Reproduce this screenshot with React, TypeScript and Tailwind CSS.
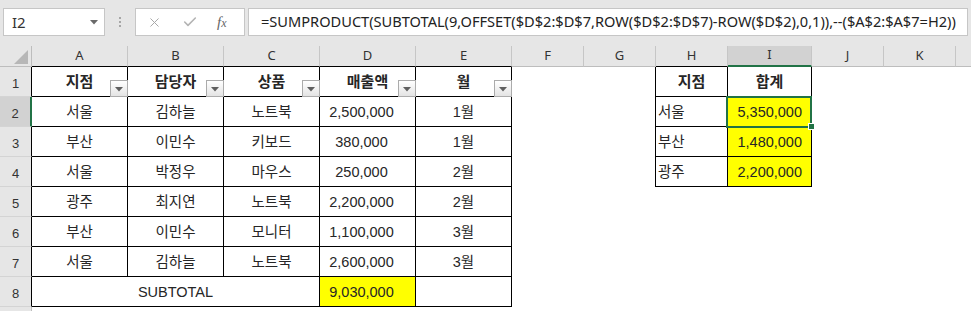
import { Check, X } from "lucide-react";

type Cell = {
  t?: string;
  span?: number;
  align?: "c" | "l" | "r" | "n";
  bold?: boolean;
  yellow?: boolean;
  b?: boolean;
  filter?: boolean;
  sel?: boolean;
};

const COLS = [96, 96, 96, 96, 96, 72, 72, 72, 84, 72, 72, 60];
const LETTERS = ["A", "B", "C", "D", "E", "F", "G", "H", "I", "J", "K", "L"];

const FORMULA = "=SUMPRODUCT(SUBTOTAL(9,OFFSET($D$2:$D$7,ROW($D$2:$D$7)-ROW($D$2),0,1)),--($A$2:$A$7=H2))";

const hd = (t: string): Cell => ({ t, bold: true, b: true, filter: true });
const c = (t: string): Cell => ({ t, b: true });
const n = (t: string): Cell => ({ t, b: true, align: "n" });
const e: Cell = {};

function dataRow(a: string, bb: string, cc: string, d: string, m: string, h?: string, i?: string, sel?: boolean): Cell[] {
  const tail: Cell[] = h
    ? [{ t: h, b: true, align: "l" }, { t: i, b: true, align: "r", yellow: true, sel }]
    : [e, e];
  return [c(a), c(bb), c(cc), n(d), c(m), e, e, ...tail, e, e, e];
}

const ROWS: Cell[][] = [
  [hd("지점"), hd("담당자"), hd("상품"), hd("매출액"), hd("월"), e, e,
    { t: "지점", bold: true, b: true }, { t: "합계", bold: true, b: true }, e, e, e],
  dataRow("서울", "김하늘", "노트북", "2,500,000", "1월", "서울", "5,350,000", true),
  dataRow("부산", "이민수", "키보드", "380,000", "1월", "부산", "1,480,000"),
  dataRow("서울", "박정우", "마우스", "250,000", "2월", "광주", "2,200,000"),
  dataRow("광주", "최지연", "노트북", "2,200,000", "2월"),
  dataRow("부산", "이민수", "모니터", "1,100,000", "3월"),
  dataRow("서울", "김하늘", "노트북", "2,600,000", "3월"),
  [{ t: "SUBTOTAL", span: 3, b: true }, { t: "9,030,000", b: true, align: "n", yellow: true }, { b: true }, e, e, e, e, e, e, e],
  [e, e, e, e, e, e, e, e, e, e, e, e],
];

function FilterButton() {
  return (
    <div className="absolute right-[-1px] bottom-[-1px] z-10 flex h-[17px] w-[18px] items-center justify-center border border-[#ababab] bg-gradient-to-b from-white to-[#e4e4e4]">
      <svg width="8" height="5" viewBox="0 0 8 5" className="mt-[2px]">
        <path d="M0 0h8L4 4.5z" fill="#5f5f5f" />
      </svg>
    </div>
  );
}

function SheetRow({ cells, index }: { cells: Cell[]; index: number }) {
  let col = 0;
  const placed = cells.map((cell) => {
    const start = col;
    col += cell.span ?? 1;
    return { cell, start };
  });
  const active = index === 2;
  const firstBorder = placed[0]?.cell.b;

  return (
    <div className="flex h-[30px]">
      <div
        className={`flex w-[32px] shrink-0 items-end justify-center border-b pb-[3px] text-[13px] text-[#333] ${
          active
            ? "border-r-2 border-b-[#d4d4d4] border-r-[#217346] bg-[#d2d2d2]"
            : `border-b-[#d4d4d4] border-r bg-[#e6e6e6] ${firstBorder ? "border-r-black" : "border-r-[#bdbdbd]"}`
        }`}
      >
        {index < 9 ? index : ""}
      </div>
      {placed.map(({ cell, start }, k) => {
        const span = cell.span ?? 1;
        const width = COLS.slice(start, start + span).reduce((s, w) => s + w, 0);
        const nextB = placed[k + 1]?.cell.b;
        const right = cell.b || nextB;
        const align =
          cell.align === "l"
            ? "justify-start pl-[2px]"
            : cell.align === "r"
              ? "justify-end pr-[9px]"
              : cell.align === "n"
                ? "justify-center pr-[12px]"
                : "justify-center";
        return (
          <div
            key={k}
            style={{ width }}
            className={`relative flex shrink-0 items-center pt-[2px] ${align} ${right ? "border-r border-r-black" : ""} ${
              cell.b ? "border-b border-b-black" : ""
            } ${cell.yellow ? "bg-[#ffff00]" : ""} ${cell.bold ? "text-[15px] font-bold" : "text-[14.5px]"}`}
          >
            {cell.t}
            {cell.filter && <FilterButton />}
            {cell.sel && (
              <>
                <div className="absolute left-[-2px] top-[-1px] z-10 h-[32px] w-[86px] border-2 border-[#217346]" />
                <div className="absolute left-[80px] top-[26px] z-20 h-[7px] w-[7px] border border-white bg-[#217346]" />
              </>
            )}
          </div>
        );
      })}
    </div>
  );
}

export default function App() {
  const tableTop = [0, 1, 2, 3, 4, 7];

  return (
    <div
      className="h-[311px] w-[971px] overflow-hidden bg-white text-[#262626]"
      style={{ fontFamily: '"Liberation Sans", "Noto Sans CJK KR", sans-serif' }}
    >
      <div className="flex h-[46px] items-start bg-[#e6e6e6] pt-[8px]" style={{ fontFamily: '"Noto Sans", "Noto Sans CJK KR", sans-serif' }}>
        <div className="ml-[3px] flex h-[28px] w-[102px] items-center justify-between border border-[#c6c6c6] bg-white pl-[8px] pr-[6px] text-[15px] text-[#333]">
          <span>I2</span>
          <svg width="8" height="5" viewBox="0 0 8 5">
            <path d="M0 0h8L4 4.5z" fill="#6a6a6a" />
          </svg>
        </div>
        <div className="flex h-[28px] w-[30px] flex-col items-center justify-center gap-[2px]">
          <span className="h-[2px] w-[2px] bg-[#a6a6a6]" />
          <span className="h-[2px] w-[2px] bg-[#a6a6a6]" />
          <span className="h-[2px] w-[2px] bg-[#a6a6a6]" />
        </div>
        <div className="flex h-[28px] w-[110px] items-center border border-[#c6c6c6] bg-white">
          <X className="ml-[11px] h-[15px] w-[15px] text-[#a8a8a8]" strokeWidth={1.6} />
          <Check className="ml-[20px] h-[16px] w-[16px] text-[#b4b4b4]" strokeWidth={2.4} />
          <span
            className="ml-[19px] italic text-[15px] text-[#666]"
            style={{ fontFamily: '"Liberation Serif", serif' }}
          >
            f<span className="text-[12px]">x</span>
          </span>
        </div>
        <div className="ml-[3px] mr-[3px] flex h-[28px] min-w-0 flex-1 items-center overflow-hidden whitespace-nowrap border border-[#c6c6c6] bg-white pl-[12px] text-[14.6px] text-[#222]">
          {FORMULA}
        </div>
      </div>

      <div className="flex h-[21px]" style={{ fontFamily: '"Noto Sans", sans-serif' }}>
        <div className="relative w-[32px] shrink-0 border-b border-r border-[#bdbdbd] bg-[#e6e6e6]">
          <svg width="14" height="14" viewBox="0 0 14 14" className="absolute left-[14px] top-[4px]">
            <path d="M14 0v14H0z" fill="#b7b7b7" />
          </svg>
        </div>
        {COLS.map((w, i) => {
          const sel = i === 8;
          const top = tableTop.includes(i);
          return (
            <div
              key={i}
              style={{ width: w }}
              className={`flex shrink-0 items-center justify-center border-r border-r-[#c6c6c6] pb-[1px] text-[13px] text-[#333] ${
                sel
                  ? "border-b-2 border-b-[#217346] bg-[#d2d2d2]"
                  : `border-b bg-[#e6e6e6] ${top ? "border-b-black" : "border-b-[#bdbdbd]"}`
              }`}
            >
              {i < 11 ? LETTERS[i] : ""}
            </div>
          );
        })}
      </div>

      {ROWS.map((cells, i) => (
        <SheetRow key={i} cells={cells} index={i + 1} />
      ))}
    </div>
  );
}
